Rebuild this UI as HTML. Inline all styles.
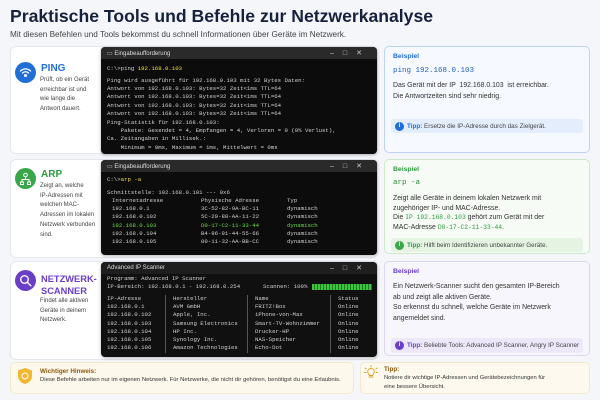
<!DOCTYPE html>
<html><head><meta charset="utf-8"><style>
*{margin:0;padding:0;box-sizing:border-box}
body{width:600px;height:400px;background:#f4f6fa;font-family:"Liberation Sans",sans-serif;position:relative;overflow:hidden;color:#333}
.a{position:absolute;white-space:nowrap}
.card{position:absolute;left:10px;width:368px;background:#fff;border:1px solid #e3e7ee;border-radius:6px}
.term{position:absolute;left:101px;width:276px;background:#0c0c0c;border-radius:4px;overflow:hidden;font-family:"Liberation Mono",monospace;font-size:5.7px;color:#d0d0d0;box-shadow:0 1px 3px rgba(0,0,0,.3)}
.tb{height:12px;background:#2a2a2a;font-family:"Liberation Sans",sans-serif;font-size:6px;color:#ddd;padding:3px 0 0 6px;position:relative}
.tb .c{position:absolute;right:6px;top:2px;letter-spacing:9px;font-size:7px;color:#ccc}
.term .a{line-height:8.2px}
.box{position:absolute;left:384px;width:206px;border-radius:5px;border:1px solid}
.desc{position:absolute;left:40px;font-size:6px;line-height:9.7px;color:#444}
.h{position:absolute;font-weight:bold;font-size:10px}
.ic{position:absolute;width:21px;height:21px;border-radius:50%}
.tip{position:absolute;left:6px;right:6px;height:14px;border-radius:3px;font-size:6.3px;padding:4px 0 0 16px;color:#444}
.tip i{position:absolute;left:4px;top:2.5px;width:9px;height:9px;border-radius:50%;color:#fff;font-style:normal;font-weight:bold;font-size:6px;text-align:center;line-height:9px}
.bt{font-size:6.9px;color:#333}
</style></head><body>
<div class="a" style="left:10px;top:6px;font-size:17.6px;font-weight:bold;color:#16213d">Praktische Tools und Befehle zur Netzwerkanalyse</div>
<div class="a" style="left:10px;top:30px;font-size:8.2px;color:#444">Mit diesen Befehlen und Tools bekommst du schnell Informationen über Geräte im Netzwerk.</div>

<!-- Row 1 -->
<div class="card" style="top:46px;height:108px"></div>
<div class="ic" style="left:15px;top:62px;background:#1f6fd6"><svg width="21" height="21" viewBox="0 0 21 21" fill="none" stroke="#fff" stroke-width="1.3" stroke-linecap="round"><path d="M5.5 9a7 7 0 0 1 10 0"/><path d="M7.5 11a4.2 4.2 0 0 1 6 0"/><circle cx="10.5" cy="13.5" r=".9" fill="#fff"/></svg></div>
<div class="h" style="left:41px;top:63px;color:#1f6fd6">PING</div>
<div class="desc" style="top:76px">Prüft, ob ein Gerät<br>erreichbar ist und<br>wie lange die<br>Antwort dauert.</div>
<div class="term" style="top:47px;height:107px">
<div class="tb">▭ Eingabeaufforderung<span class="c">–□✕</span></div>
<div class="a" style="left:6px;top:18px">C:\&gt;ping <span style="color:#f0e040">192.168.0.103</span></div>
<div class="a" style="left:6px;top:30px">Ping wird ausgeführt für 192.168.0.103 mit 32 Bytes Daten:<br>Antwort von 192.168.0.103: Bytes=32 Zeit&lt;1ms TTL=64<br>Antwort von 192.168.0.103: Bytes=32 Zeit&lt;1ms TTL=64<br>Antwort von 192.168.0.103: Bytes=32 Zeit&lt;1ms TTL=64<br>Antwort von 192.168.0.103: Bytes=32 Zeit&lt;1ms TTL=64</div>
<div class="a" style="left:6px;top:72px">Ping-Statistik für 192.168.0.103:<br>&nbsp;&nbsp;&nbsp;&nbsp;Pakete: Gesendet = 4, Empfangen = 4, Verloren = 0 (0% Verlust),<br>Ca. Zeitangaben in Millisek.:<br>&nbsp;&nbsp;&nbsp;&nbsp;Minimum = 0ms, Maximum = 1ms, Mittelwert = 0ms</div>
</div>
<div class="box" style="top:46px;height:107px;background:#f6f9ff;border-color:#bcd3f3">
<div class="a" style="left:8px;top:6px;font-size:6.8px;font-weight:bold;color:#1f6fd6">Beispiel</div>
<div class="a" style="left:8px;top:20px;font-family:'Liberation Mono',monospace;font-size:7.5px;color:#1f5fbf">ping 192.168.0.103</div>
<div class="a bt" style="left:8px;top:33px;line-height:11px">Das Gerät mit der IP &nbsp;192.168.0.103 &nbsp;ist erreichbar.<br>Die Antwortzeiten sind sehr niedrig.</div>
<div class="tip" style="top:72px;background:#e3edfb"><i style="background:#1f6fd6">i</i><b style="color:#1f6fd6">Tipp:</b> Ersetze die IP-Adresse durch das Zielgerät.</div>
</div>

<!-- Row 2 -->
<div class="card" style="top:159px;height:99px"></div>
<div class="ic" style="left:15px;top:168px;background:#3aa64a"><svg width="21" height="21" viewBox="0 0 21 21" fill="none" stroke="#fff" stroke-width="1"><circle cx="10.5" cy="7" r="1.8"/><path d="M10.5 9v2.5M7 14v-2.5h7v2.5"/><rect x="5.5" y="14" width="3" height="2.5"/><rect x="12.5" y="14" width="3" height="2.5"/></svg></div>
<div class="h" style="left:41px;top:169px;color:#2f9a40">ARP</div>
<div class="desc" style="top:182px">Zeigt an, welche<br>IP-Adressen mit<br>welchen MAC-<br>Adressen im lokalen<br>Netzwerk verbunden<br>sind.</div>
<div class="term" style="top:160px;height:95px">
<div class="tb">▭ Eingabeaufforderung<span class="c">–□✕</span></div>
<div class="a" style="left:6px;top:16px">C:\&gt;<span style="color:#f0e040">arp -a</span></div>
<div class="a" style="left:6px;top:29px">Schnittstelle: 192.168.0.101 --- 0x6</div>
<div class="a" style="left:11px;top:37px">Internetadresse<br>192.168.0.1<br>192.168.0.102<br><span style="color:#6fdc4a">192.168.0.103</span><br>192.168.0.104<br>192.168.0.105</div>
<div class="a" style="left:100px;top:37px">Physische Adresse<br>3C-52-82-9A-BC-11<br>5C-20-88-AA-11-22<br><span style="color:#6fdc4a">D0-17-C2-11-33-44</span><br>B4-96-91-44-55-66<br>00-11-32-AA-BB-CC</div>
<div class="a" style="left:186px;top:37px">Typ<br>dynamisch<br>dynamisch<br><span style="color:#6fdc4a">dynamisch</span><br>dynamisch<br>dynamisch</div>
</div>
<div class="box" style="top:159px;height:95px;background:#f6fbf5;border-color:#cfe8cc">
<div class="a" style="left:8px;top:6px;font-size:6.8px;font-weight:bold;color:#2f9a40">Beispiel</div>
<div class="a" style="left:8px;top:19px;font-family:'Liberation Mono',monospace;font-size:7.5px;color:#2f8a3a">arp -a</div>
<div class="a bt" style="left:8px;top:34px;line-height:9.7px">Zeigt alle Geräte in deinem lokalen Netzwerk mit<br>zugehöriger IP- und MAC-Adresse.<br>Die <span style="color:#2f9a40;font-family:'Liberation Mono',monospace;font-size:6.3px">IP 192.168.0.103</span> gehört zum Gerät mit der<br>MAC-Adresse <span style="color:#2f9a40;font-family:'Liberation Mono',monospace;font-size:6.3px">D0-17-C2-11-33-44</span>.</div>
<div class="tip" style="top:78px;background:#e4f3e2"><i style="background:#3aa64a">i</i><b style="color:#2f9a40">Tipp:</b> Hilft beim Identifizieren unbekannter Geräte.</div>
</div>

<!-- Row 3 -->
<div class="card" style="top:261px;height:99px"></div>
<div class="ic" style="left:15px;top:270px;background:#6a3fc8"><svg width="21" height="21" viewBox="0 0 21 21" fill="none" stroke="#fff" stroke-width="1.4" stroke-linecap="round"><circle cx="9.5" cy="9.5" r="3.8"/><path d="M12.3 12.3l3.5 3.5"/></svg></div>
<div class="h" style="left:41px;top:273px;color:#6a3fc8;line-height:12px;font-size:9.3px">NETZWERK-<br>SCANNER</div>
<div class="desc" style="top:297px">Findet alle aktiven<br>Geräte in deinem<br>Netzwerk.</div>
<div class="term" style="top:262px;height:95px;background:#101010">
<div class="tb" style="background:#1e1e1e">Advanced IP Scanner<span class="c">–□✕</span></div>
<div class="a" style="left:6px;top:13px">Programm: Advanced IP Scanner<br>IP-Bereich: 192.168.0.1 - 192.168.0.254</div>
<div class="a" style="left:162px;top:21px">Scannen: 100%</div>
<div class="a" style="left:211px;top:22px;width:60px;height:6px;background:repeating-linear-gradient(90deg,#3ec43e 0 2px,#1f7a1f 2px 3px)"></div>
<div style="position:absolute;left:64px;top:33px;width:1px;height:58px;background:#555"></div>
<div style="position:absolute;left:146px;top:33px;width:1px;height:58px;background:#555"></div>
<div style="position:absolute;left:229px;top:33px;width:1px;height:58px;background:#555"></div>
<div class="a" style="left:6px;top:33px">IP-Adresse<br>192.168.0.1<br>192.168.0.102<br>192.168.0.103<br>192.168.0.104<br>192.168.0.105<br>192.168.0.106</div>
<div class="a" style="left:72px;top:33px">Hersteller<br>AVM GmbH<br>Apple, Inc.<br>Samsung Electronics<br>HP Inc.<br>Synology Inc.<br>Amazon Technologies</div>
<div class="a" style="left:154px;top:33px">Name<br>FRITZ!Box<br>iPhone-von-Max<br>Smart-TV-Wohnzimmer<br>Drucker-HP<br>NAS-Speicher<br>Echo-Dot</div>
<div class="a" style="left:237px;top:33px">Status<br>Online<br>Online<br>Online<br>Online<br>Online<br>Online</div>
</div>
<div class="box" style="top:261px;height:95px;background:#f7f6fd;border-color:#ddd6f3">
<div class="a" style="left:8px;top:6px;font-size:6.8px;font-weight:bold;color:#6a3fc8">Beispiel</div>
<div class="a bt" style="left:8px;top:20px;line-height:10.6px">Ein Netzwerk-Scanner sucht den gesamten IP-Bereich<br>ab und zeigt alle aktiven Geräte.<br>So erkennst du schnell, welche Geräte im Netzwerk<br>angemeldet sind.</div>
<div class="tip" style="top:76px;height:15px;background:#ece8f9"><i style="background:#6a3fc8">i</i><b style="color:#6a3fc8">Tipp:</b> Beliebte Tools: Advanced IP Scanner, Angry IP Scanner</div>
</div>

<!-- Bottom -->
<div style="position:absolute;left:10px;top:362px;width:344px;height:32px;background:#fdf8ec;border:1px solid #f3e8cc;border-radius:5px"></div>
<svg class="a" style="left:17px;top:367px" width="16" height="18" viewBox="0 0 16 18"><path d="M8 1L15 3.5V9c0 4-3 6.8-7 8C4 15.8 1 13 1 9V3.5z" fill="#f2b630"/><circle cx="8" cy="9" r="3" fill="none" stroke="#fff" stroke-width="1"/></svg>
<div class="a" style="left:40px;top:368px;font-size:6.3px;font-weight:bold;color:#8a5a10">Wichtiger Hinweis:</div>
<div class="a" style="left:40px;top:377px;font-size:5.9px;color:#333">Diese Befehle arbeiten nur im eigenen Netzwerk. Für Netzwerke, die nicht dir gehören, benötigst du eine Erlaubnis.</div>
<div style="position:absolute;left:360px;top:362px;width:230px;height:32px;background:#fdf9ee;border:1px solid #f3e8cc;border-radius:5px"></div>
<svg class="a" style="left:364px;top:365px" width="14" height="14" viewBox="0 0 14 14" fill="none" stroke="#d9a020" stroke-width="0.9" stroke-linecap="round"><path d="M7 0.5v1.5M1 3l1.2 1M13 3l-1.2 1M0.5 7.5h1.5M13.5 7.5H12"/><path d="M5 12h4M5.3 10.5h3.4c0-1.5 1.6-2 1.6-3.8a3.3 3.3 0 0 0-6.6 0c0 1.8 1.6 2.3 1.6 3.8z"/></svg>
<div class="a" style="left:384px;top:366px;font-size:6.3px;font-weight:bold;color:#8a5a10">Tipp:</div>
<div class="a" style="left:384px;top:374px;font-size:5.8px;line-height:8.5px;color:#333">Notiere dir wichtige IP-Adressen und Gerätebezeichnungen für<br>eine bessere Übersicht.</div>
</body></html>
